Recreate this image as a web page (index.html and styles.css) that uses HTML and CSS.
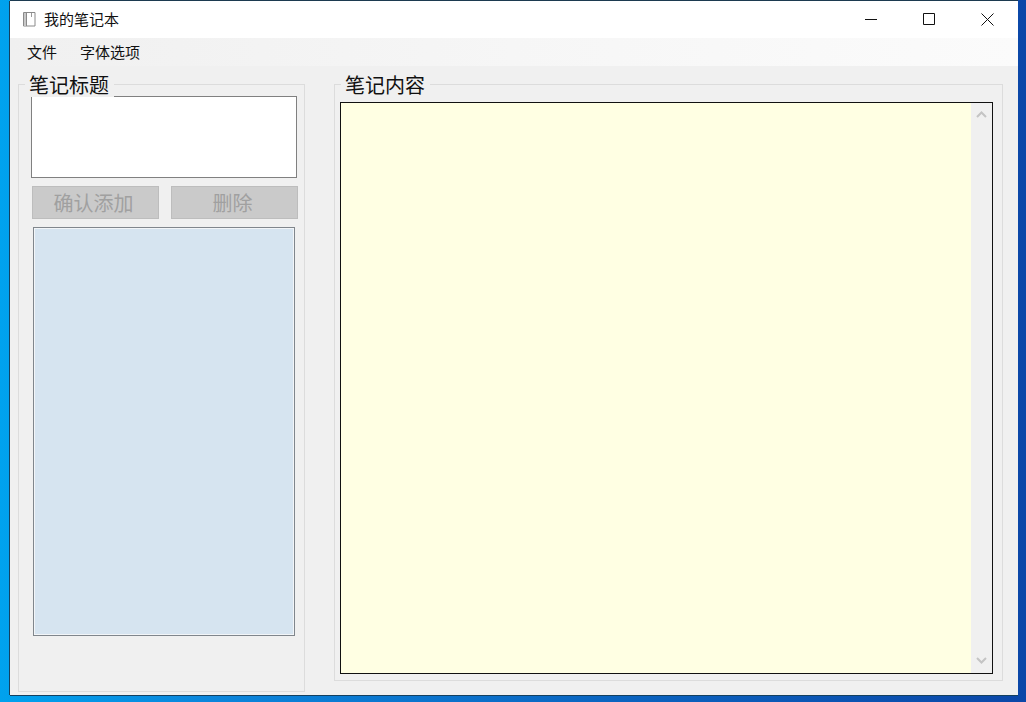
FILE: index.html
```html
<!DOCTYPE html>
<html lang="zh-CN">
<head>
<meta charset="utf-8">
<title>我的笔记本</title>
<link rel="stylesheet" href="styles.css">
</head>
<body>
<div class="window">
  <header class="titlebar">
    <svg class="app-icon" width="13" height="15" viewBox="0 0 13 15"><path d="M.5.500h11.500v13.500H.5z" fill="#fff" stroke="#8a8a8a"/><path d="M3.500.500v13.500" stroke="#8a8a8a"/><path d="M1 1h2v13H1z" fill="#c8c8c8"/><path d="M8.500 1v4" stroke="#9a9a9a"/></svg>
    <span class="app-title">我的笔记本</span>
    <div class="controls">
      <svg width="13" height="13" viewBox="0 0 13 13"><path d="M0 6.500h12" stroke="#111"/></svg>
      <svg width="13" height="13" viewBox="0 0 13 13"><path d="M.5.500h11v11H.5z" fill="none" stroke="#111"/></svg>
      <svg width="13" height="13" viewBox="0 0 13 13"><path d="M.5.500l12 12M12.500.500l-12 12" fill="none" stroke="#111"/></svg>
    </div>
  </header>
  <nav class="menubar">
    <span class="menu-item">文件</span>
    <span class="menu-item">字体选项</span>
  </nav>
  <main class="content">
    <section class="group group-left">
      <h2 class="legend">笔记标题</h2>
      <div class="title-input"></div>
      <div class="buttons">
        <button class="btn" disabled>确认添加</button>
        <button class="btn" disabled>删除</button>
      </div>
      <div class="note-list"></div>
    </section>
    <section class="group group-right">
      <h2 class="legend">笔记内容</h2>
      <div class="editor">
        <div class="paper"></div>
        <div class="scrollbar">
          <svg width="11" height="7" viewBox="0 0 11 7"><path d="M1 6l4.500-4.500L10 6" fill="none" stroke="#c4c4c4" stroke-width="2"/></svg>
          <svg width="11" height="7" viewBox="0 0 11 7"><path d="M1 1l4.500 4.500L10 1" fill="none" stroke="#c4c4c4" stroke-width="2"/></svg>
        </div>
      </div>
    </section>
  </main>
</div>
</body>
</html>
```
FILE: styles.css
```css
* { box-sizing: border-box; }
html, body { height: 100%; }
body {
  margin: 0;
  overflow: hidden;
  padding: 1px 0 0 10px;
  background: linear-gradient(90deg, #00a2ee 0, #0b86dc 20%, #0a64c0 60%, #0b47a8 100%);
  font-family: "Noto Sans CJK SC", "Noto Sans", sans-serif;
  color: #111;
}
.window {
  width: 1008px;
  height: 694px;
  display: flex;
  flex-direction: column;
  background: #f0f0f0;
  box-shadow: 0 -1px 0 #1c3a50, -1px 0 0 #14405f, 0 1px 0 #14405f;
}
.titlebar {
  height: 37px;
  flex: none;
  display: flex;
  align-items: center;
  background: #fff;
  padding-left: 13px;
}
.app-icon { margin-top: -1px; }
.app-title { margin-left: 8px; font-size: 15px; line-height: 20px; margin-top: -2px; }
.controls {
  margin-left: auto;
  width: 153px;
  padding-right: 24px;
  display: flex;
  justify-content: space-between;
  margin-top: -1px;
}
.menubar {
  height: 28px;
  flex: none;
  display: flex;
  align-items: center;
  gap: 23px;
  padding-left: 17px;
  background: linear-gradient(90deg, #f0f0f0 0, #f6f6f6 50%, #fbfbfb 100%);
}
.menu-item { font-size: 15px; line-height: 20px; margin-top: -1px; }
.content {
  flex: 1;
  display: flex;
  align-items: flex-start;
  padding: 18px 15px 0 8px;
  gap: 29px;
}
.group {
  position: relative;
  border: 1px solid #dcdcdc;
}
.group-left {
  width: 287px;
  height: 608px;
  padding: 11px 6px 0 12px;
}
.group-right {
  width: 669px;
  height: 597px;
  padding: 17px 9px 0 5px;
}
.legend {
  position: absolute;
  top: -12px;
  left: 6px;
  margin: 0;
  padding: 0 5px 0 4px;
  background: #f0f0f0;
  font-size: 20px;
  line-height: 24px;
  font-weight: 400;
}
.title-input {
  width: 266px;
  height: 82px;
  background: #fff;
  border: 1px solid #808080;
}
.buttons {
  display: flex;
  gap: 12px;
  margin: 8px 0 8px 1px;
}
.btn {
  width: 127px;
  height: 33px;
  padding: 0 4px 0 0;
  border: 1px solid #bdbdbd;
  background: #cacaca;
  color: #a0a0a0;
  font-family: inherit;
  font-size: 20px;
  line-height: 30px;
}
.note-list {
  width: 262px;
  height: 409px;
  margin-left: 2px;
  background: #d6e4f0;
  border: 1px solid #80868c;
  box-shadow: inset 0 0 0 1px #f2f5f8;
}
.editor {
  width: 653px;
  height: 572px;
  display: flex;
  background: #fff;
  border: 1px solid #111;
}
.paper { flex: 1; background: #ffffe3; }
.scrollbar {
  width: 21px;
  background: #f0f0f0;
  display: flex;
  flex-direction: column;
  justify-content: space-between;
  align-items: center;
  padding: 8px 0 9px;
}
```
